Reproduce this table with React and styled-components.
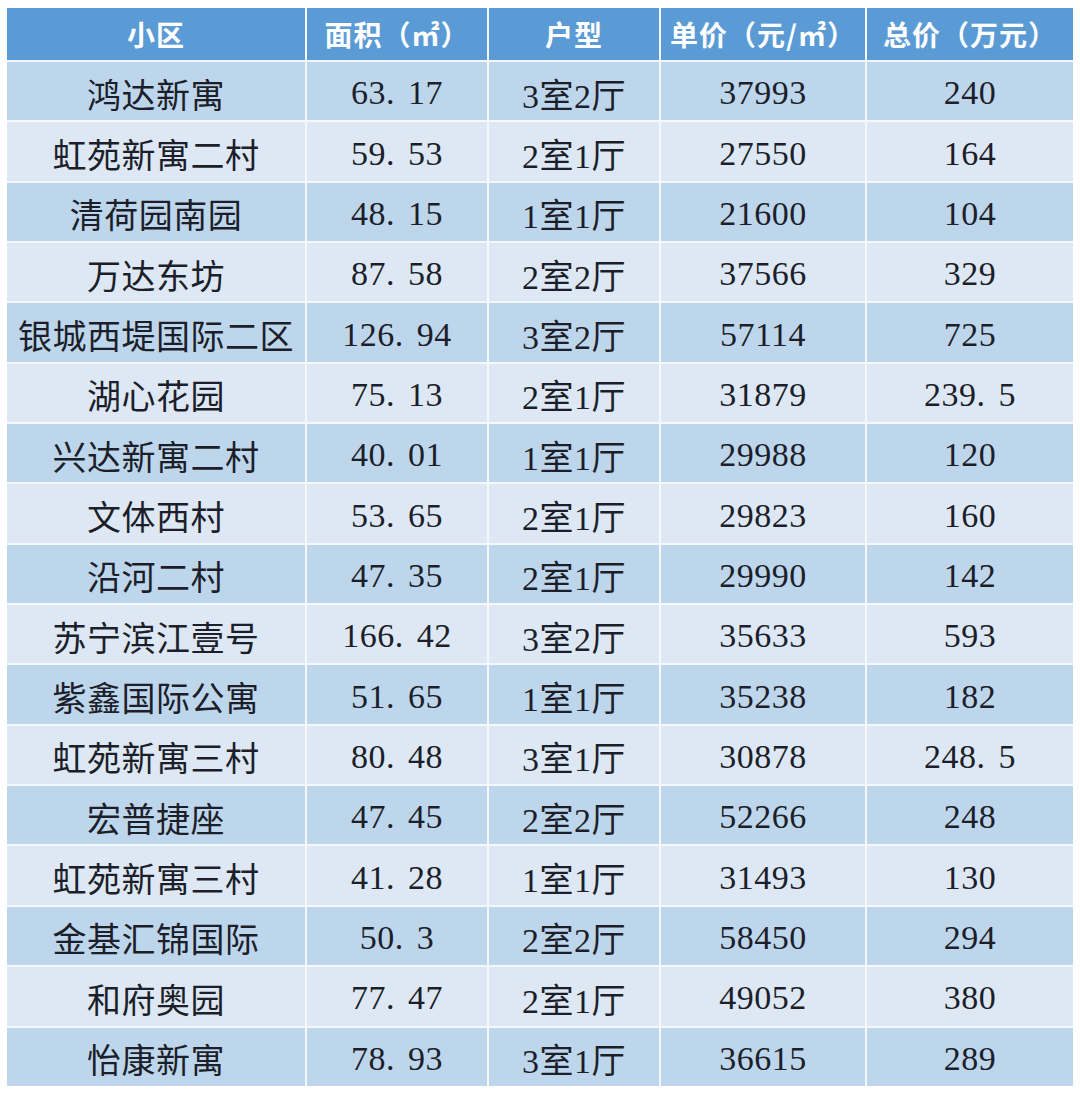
import React from 'react';
import styled, { createGlobalStyle } from 'styled-components';

const GlobalStyle = createGlobalStyle`
  html, body {
    margin: 0;
    padding: 0;
    background: #ffffff;
  }
`;

const Page = styled.div`
  width: 1080px;
  height: 1094px;
  box-sizing: border-box;
  padding: 8px 7px 0 7px;
  background: #ffffff;
`;

const Grid = styled.div`
  display: grid;
  grid-template-columns: 298px 180px 170px 204px 206px;
  grid-template-rows: 52px;
  grid-auto-rows: 58.35px;
  gap: 2px;
  background: #f4f8fc;
`;

const HeadCell = styled.div`
  display: flex;
  align-items: center;
  justify-content: center;
  background: #5b9bd5;
  color: #ffffff;
  font-family: "Noto Sans CJK SC", "Noto Sans", sans-serif;
  font-weight: 700;
  font-size: 28px;
  white-space: nowrap;
  letter-spacing: 1px;
`;

const Cell = styled.div`
  display: flex;
  align-items: center;
  justify-content: center;
  box-sizing: border-box;
  padding-top: 4px;
  background: ${(p) => (p.$dark ? '#bed6ec' : '#dde8f4')};
  color: #1c1f2a;
  font-family: "Liberation Serif", "Times New Roman", "DejaVu Serif", "Noto Sans CJK SC", serif;
  font-size: 34px;
  white-space: nowrap;
  letter-spacing: 0.5px;
`;

const Dot = styled.span`
  margin-right: 13px;
`;

const headers = ['小区', '面积（㎡）', '户型', '单价（元/㎡）', '总价（万元）'];

const rows = [
  ['鸿达新寓', '63.17', '3室2厅', '37993', '240'],
  ['虹苑新寓二村', '59.53', '2室1厅', '27550', '164'],
  ['清荷园南园', '48.15', '1室1厅', '21600', '104'],
  ['万达东坊', '87.58', '2室2厅', '37566', '329'],
  ['银城西堤国际二区', '126.94', '3室2厅', '57114', '725'],
  ['湖心花园', '75.13', '2室1厅', '31879', '239.5'],
  ['兴达新寓二村', '40.01', '1室1厅', '29988', '120'],
  ['文体西村', '53.65', '2室1厅', '29823', '160'],
  ['沿河二村', '47.35', '2室1厅', '29990', '142'],
  ['苏宁滨江壹号', '166.42', '3室2厅', '35633', '593'],
  ['紫鑫国际公寓', '51.65', '1室1厅', '35238', '182'],
  ['虹苑新寓三村', '80.48', '3室1厅', '30878', '248.5'],
  ['宏普捷座', '47.45', '2室2厅', '52266', '248'],
  ['虹苑新寓三村', '41.28', '1室1厅', '31493', '130'],
  ['金基汇锦国际', '50.3', '2室2厅', '58450', '294'],
  ['和府奥园', '77.47', '2室1厅', '49052', '380'],
  ['怡康新寓', '78.93', '3室1厅', '36615', '289'],
];

function Num({ value }) {
  const parts = value.split('.');
  if (parts.length === 1) return value;
  return (
    <>
      {parts[0]}
      <Dot>.</Dot>
      {parts[1]}
    </>
  );
}

export default function App() {
  return (
    <Page>
      <GlobalStyle />
      <Grid>
        {headers.map((h) => (
          <HeadCell key={h}>{h}</HeadCell>
        ))}
        {rows.map((row, i) =>
          row.map((v, j) => (
            <Cell key={`${i}-${j}`} $dark={i % 2 === 0}>
              {j === 1 || j === 4 ? <Num value={v} /> : v}
            </Cell>
          ))
        )}
      </Grid>
    </Page>
  );
}
